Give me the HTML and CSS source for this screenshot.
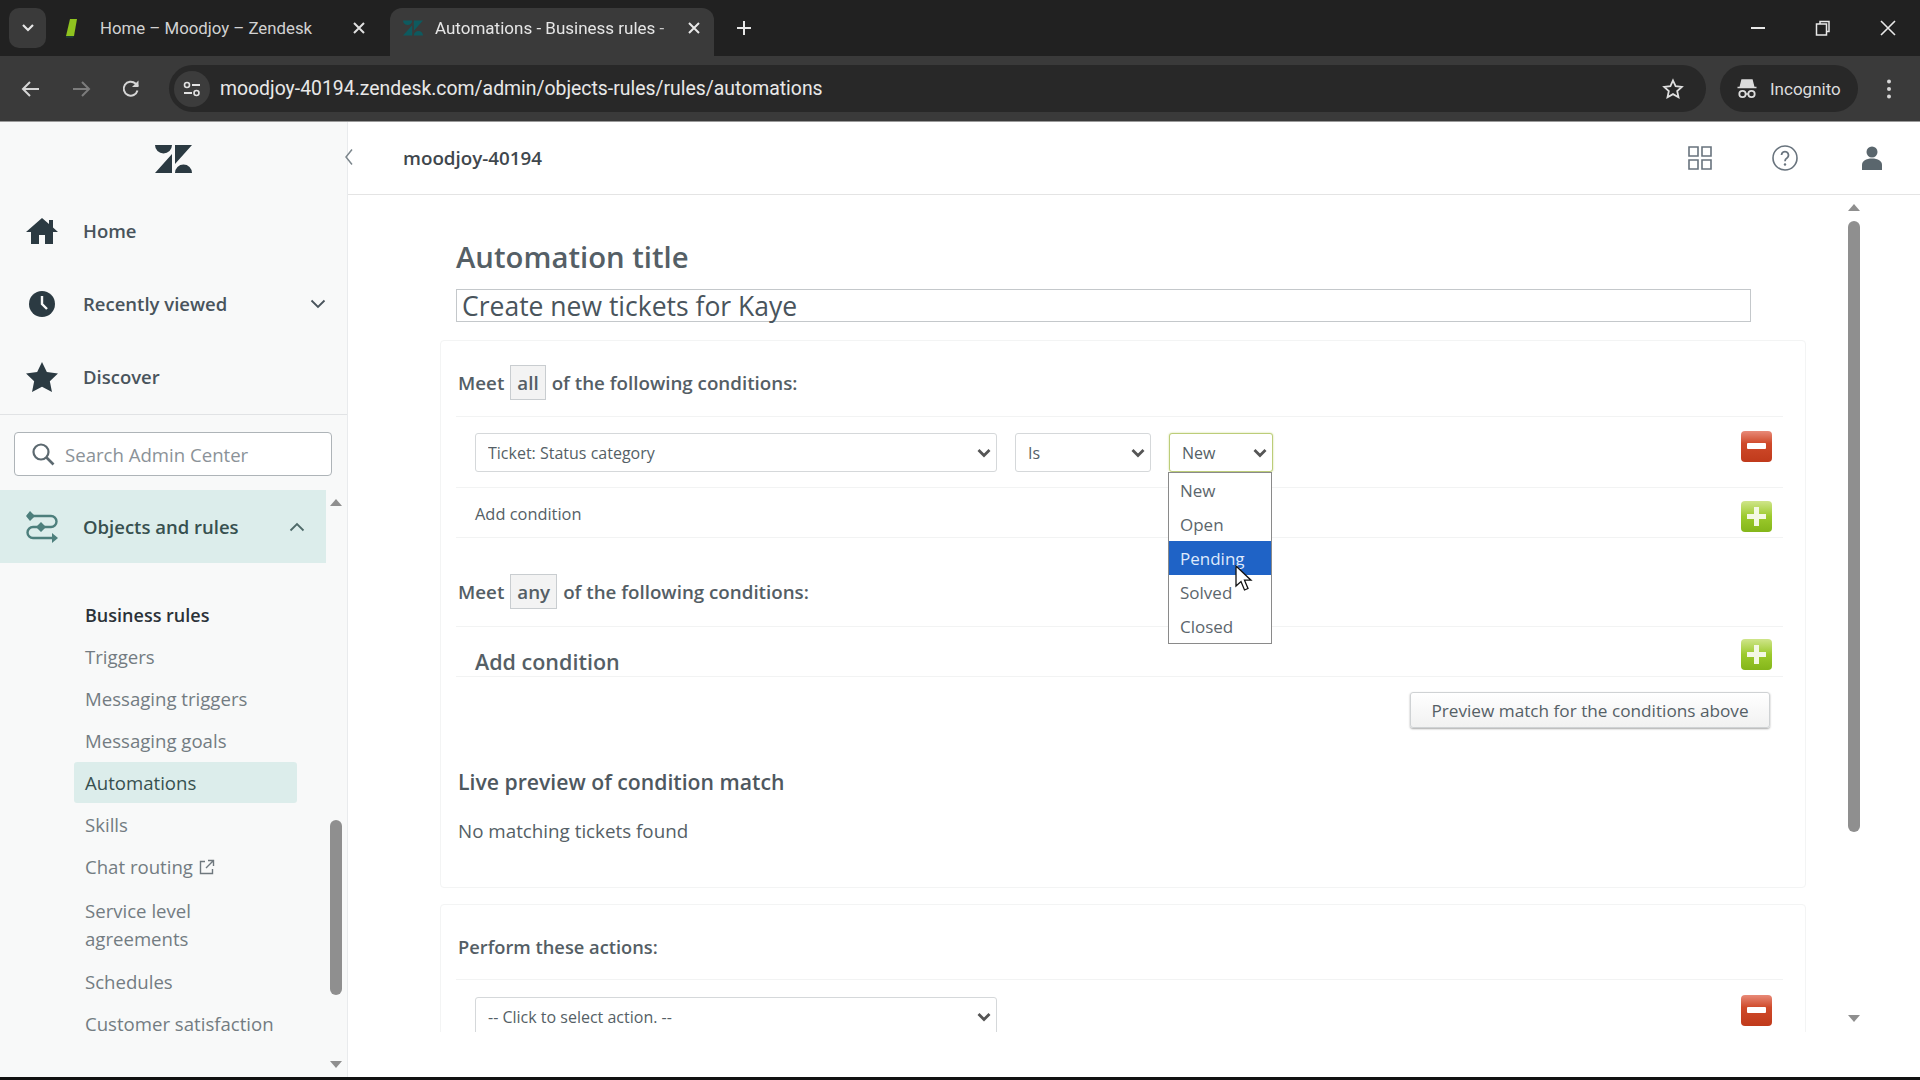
FILE: index.html
```html
<!DOCTYPE html>
<html lang="en">
<head>
<meta charset="utf-8">
<title>Automations - Business rules - Zendesk</title>
<link rel="stylesheet" href="styles.css">
</head>
<body>
<div class="chrome-tabs">
  <button class="tab-search"><svg width="14" height="10" viewBox="0 0 14 10"><path d="M2 2l5 5 5-5" fill="none" stroke="#e6e6e6" stroke-width="2.2"/></svg></button>
  <div class="tab">
    <svg class="favicon" width="18" height="20" viewBox="0 0 18 20"><path d="M6 1h7L10 18H2z" fill="#8fc31f"/><path d="M2 18h8l-1 2H2z" fill="#1d3a2f"/></svg>
    <span class="tab-title">Home – Moodjoy – Zendesk</span>
    <svg class="tab-x" width="14" height="14" viewBox="0 0 14 14"><path d="M2 2l10 10M12 2L2 12" stroke="#e0e0e0" stroke-width="2"/></svg>
  </div>
  <div class="tab tab-active">
    <svg class="favicon" width="20" height="18" viewBox="0 0 37 28"><path d="M0 0H17A8.500 8.500 0 0 1 0 0ZM17 9V28H0ZM20 0V19L37 0ZM20 28A8.500 8.500 0 0 1 37 28Z" fill="#0e5a5f"/></svg>
    <span class="tab-title tab-fade">Automations - Business rules -</span>
    <svg class="tab-x" width="14" height="14" viewBox="0 0 14 14"><path d="M2 2l10 10M12 2L2 12" stroke="#e8e8e8" stroke-width="2"/></svg>
  </div>
  <svg class="new-tab" width="16" height="16" viewBox="0 0 16 16"><path d="M8 1v14M1 8h14" stroke="#e6e6e6" stroke-width="2"/></svg>
  <div class="win-controls">
    <svg width="16" height="16" viewBox="0 0 16 16"><path d="M1 8h14" stroke="#e8e8e8" stroke-width="2"/></svg>
    <svg width="16" height="16" viewBox="0 0 16 16"><path d="M5 3.500V1.500h9v10h-2.500M1.500 4h10v11h-10z" fill="none" stroke="#e8e8e8" stroke-width="1.500"/></svg>
    <svg width="16" height="16" viewBox="0 0 16 16"><path d="M1 1l14 14M15 1L1 15" stroke="#e8e8e8" stroke-width="1.600"/></svg>
  </div>
</div>

<div class="chrome-toolbar">
  <div class="nav-buttons">
    <svg width="20" height="20" viewBox="0 0 20 20"><path d="M18 10H3M9 3l-7 7 7 7" fill="none" stroke="#d6d6d6" stroke-width="2"/></svg>
    <svg width="20" height="20" viewBox="0 0 20 20"><path d="M2 10h15M11 3l7 7-7 7" fill="none" stroke="#7c7c7c" stroke-width="2"/></svg>
    <svg width="20" height="20" viewBox="0 0 20 20"><path d="M16.500 11.500A7 7 0 1 1 14.500 4.500L17 7" fill="none" stroke="#d6d6d6" stroke-width="2"/><path d="M17.500 1.500v6.500h-6.500z" fill="#d6d6d6"/></svg>
  </div>
  <div class="address">
    <span class="site-icon"><svg width="20" height="20" viewBox="0 0 20 20"><circle cx="5" cy="6" r="2.500" fill="none" stroke="#e2e2e2" stroke-width="1.600"/><path d="M10 6h8M2 14h8" stroke="#e2e2e2" stroke-width="1.800"/><circle cx="14.500" cy="14" r="2.500" fill="none" stroke="#e2e2e2" stroke-width="1.600"/></svg></span>
    <span class="url">moodjoy-40194.zendesk.com/admin/objects-rules/rules/automations</span>
    <svg class="bookmark" width="22" height="22" viewBox="0 0 22 22"><path d="M11 2.500l2.600 5.700 6.200.7-4.600 4.200 1.300 6.100L11 16.100l-5.500 3.100 1.300-6.100-4.600-4.200 6.200-.7z" fill="none" stroke="#e0e0e0" stroke-width="1.800"/></svg>
  </div>
  <div class="incognito">
    <svg width="22" height="22" viewBox="0 0 22 22"><path d="M6 2h10l1.500 6h-13zM1.500 9.500h19" fill="#dcdcdc" stroke="#dcdcdc" stroke-width="1.500"/><circle cx="6.500" cy="16" r="3.200" fill="none" stroke="#dcdcdc" stroke-width="1.800"/><circle cx="15.500" cy="16" r="3.200" fill="none" stroke="#dcdcdc" stroke-width="1.800"/><path d="M9.700 16h2.600" stroke="#dcdcdc" stroke-width="1.500"/></svg>
    <span>Incognito</span>
  </div>
  <svg class="kebab" width="6" height="22" viewBox="0 0 6 22"><circle cx="3" cy="3.500" r="2" fill="#d6d6d6"/><circle cx="3" cy="11" r="2" fill="#d6d6d6"/><circle cx="3" cy="18.500" r="2" fill="#d6d6d6"/></svg>
</div>

<div class="app">
  <aside class="sidebar">
    <div class="brand">
      <svg width="37" height="28" viewBox="0 0 37 28"><path d="M0 0H17A8.500 8.500 0 0 1 0 0ZM17 9V28H0ZM20 0V19L37 0ZM20 28A8.500 8.500 0 0 1 37 28Z" fill="#2b3a42"/></svg>
    </div>
    <nav class="primary-nav">
      <a class="nav-row">
        <svg class="nav-icon" width="34" height="28" viewBox="0 0 34 28"><path d="M17 1L1 15h5v12h8v-9h6v9h8V15h5l-5-4.400V3h-4v4.100z" fill="#2b3a42"/></svg>
        <span>Home</span>
      </a>
      <a class="nav-row">
        <svg class="nav-icon" width="34" height="28" viewBox="0 0 34 28"><circle cx="17" cy="14" r="13" fill="#2b3a42"/><path d="M17 6v8l5 5" fill="none" stroke="#f8f9f9" stroke-width="2.400"/></svg>
        <span>Recently viewed</span>
        <svg class="nav-chev" width="16" height="10" viewBox="0 0 16 10"><path d="M1.500 1.500L8 8l6.500-6.500" fill="none" stroke="#49545c" stroke-width="1.800"/></svg>
      </a>
      <a class="nav-row">
        <svg class="nav-icon" width="34" height="30" viewBox="0 0 34 31"><path d="M17 0l5 10.400 11.500 1.500-8.400 7.900 2.200 11.200L17 25.500 6.700 31l2.200-11.200L.5 11.900 12 10.400z" fill="#2b3a42"/></svg>
        <span>Discover</span>
      </a>
    </nav>
    <div class="search">
      <svg width="24" height="24" viewBox="0 0 24 24"><circle cx="10" cy="10" r="7.500" fill="none" stroke="#5c6970" stroke-width="2.200"/><path d="M15.500 15.500l7 7" stroke="#5c6970" stroke-width="2.600"/></svg>
      <span>Search Admin Center</span>
    </div>
    <a class="section-row">
      <svg class="nav-icon" width="34" height="34" viewBox="0 0 34 34"><path d="M2 6h24a5 5 0 0 1 0 11H8a5.500 5.500 0 0 0 0 11h22" fill="none" stroke="#4d7f7c" stroke-width="2.400"/><path d="M5 1l5 5-5 5-4-5zM16 12l5 5-5 5-5-5z" fill="#4d7f7c"/><path d="M27 23l6 5-6 5z" fill="#4d7f7c"/></svg>
      <span>Objects and rules</span>
      <svg class="nav-chev" width="16" height="10" viewBox="0 0 16 10"><path d="M1.500 8.500L8 2l6.500 6.500" fill="none" stroke="#4f6a69" stroke-width="1.800"/></svg>
    </a>
    <ul class="subnav">
      <li class="sub-heading">Business rules</li>
      <li>Triggers</li>
      <li>Messaging triggers</li>
      <li>Messaging goals</li>
      <li class="sub-active"><span>Automations</span></li>
      <li>Skills</li>
      <li>Chat routing <svg class="ext" width="16" height="16" viewBox="0 0 16 16"><path d="M6 2.500H1.500v12h12V10M9 1.500h5.500V7M14.500 1.500L7 9" fill="none" stroke="#6f787e" stroke-width="1.400"/></svg></li>
      <li class="sub-two">Service level<br>agreements</li>
      <li>Schedules</li>
      <li>Customer satisfaction</li>
    </ul>
    <div class="side-scroll">
      <i class="arrow-up"></i>
      <i class="side-thumb"></i>
      <i class="arrow-down"></i>
    </div>
  </aside>

  <main class="content">
    <svg class="collapse" width="10" height="18" viewBox="0 0 10 18"><path d="M8 1.500L2 9l6 7.500" fill="none" stroke="#7c868c" stroke-width="1.500"/></svg>
    <header class="topbar">
      <span class="account">moodjoy-40194</span>
      <div class="top-icons">
        <svg width="24" height="24" viewBox="0 0 24 24"><path d="M1 1h9v9H1zM14 1h9v9h-9zM1 14h9v9H1zM14 14h9v9h-9z" fill="none" stroke="#68737d" stroke-width="1.600"/></svg>
        <svg width="26" height="26" viewBox="0 0 26 26"><circle cx="13" cy="13" r="12" fill="none" stroke="#68737d" stroke-width="1.600"/><path d="M9.500 10a3.500 3.500 0 1 1 5.500 3c-1.400.9-2 1.500-2 3.200" fill="none" stroke="#68737d" stroke-width="1.800"/><circle cx="13" cy="19.500" r="1.200" fill="#68737d"/></svg>
        <svg class="person" width="20" height="24" viewBox="0 0 20 24"><circle cx="10" cy="6" r="5.500" fill="#5a666d"/><path d="M0 24v-5c0-4 4-6.500 10-6.500s10 2.500 10 6.500v5z" fill="#5a666d"/></svg>
      </div>
    </header>
    <div class="scroller">
      <div class="form-head">
        <h1>Automation title</h1>
        <div class="title-input">Create new tickets for Kaye</div>
      </div>

      <section class="card card-main">
        <div class="meet-row meet-first">Meet <b class="pill">all</b> of the following conditions:</div>
        <div class="cond-row">
          <select class="sel sel-field"><option>Ticket: Status category</option></select>
          <select class="sel sel-op"><option>Is</option></select>
          <select class="sel sel-val"><option>New</option></select>
          <span class="btn-icon btn-minus"><i></i></span>
        </div>
        <div class="add-row add-row-small">
          <span class="add-small">Add condition</span>
          <span class="btn-icon btn-plus"><i></i><i></i></span>
        </div>
        <div class="meet-row meet-second">Meet <b class="pill">any</b> of the following conditions:</div>
        <div class="add-row add-row-big">
          <span class="add-big">Add condition</span>
          <span class="btn-icon btn-plus"><i></i><i></i></span>
        </div>
        <div class="preview-action"><button class="preview-btn">Preview match for the conditions above</button></div>
        <h2>Live preview of condition match</h2>
        <p class="no-match">No matching tickets found</p>
      </section>

      <section class="card card-actions">
        <div class="actions-title">Perform these actions:</div>
        <div class="action-row">
          <select class="sel sel-field"><option>-- Click to select action. --</option></select>
          <span class="btn-icon btn-minus"><i></i></span>
        </div>
      </section>

      <ul class="dropdown">
        <li>New</li>
        <li>Open</li>
        <li class="dd-active">Pending</li>
        <li>Solved</li>
        <li>Closed</li>
      </ul>
      <svg class="cursor" width="18" height="27" viewBox="0 0 18 27"><path d="M1 1v20l5-4.500 3.500 8.500 3.500-1.500-3.500-8.300H16z" fill="#fff" stroke="#111" stroke-width="1.300"/></svg>
    </div>
    <div class="main-scroll">
      <i class="arrow-up"></i>
      <i class="main-thumb"></i>
      <i class="arrow-down"></i>
    </div>
  </main>
</div>
<div class="bottom-edge"></div>
</body>
</html>
```

FILE: styles.css
```css
* { box-sizing: border-box; }
html, body { margin: 0; height: 1080px; overflow: hidden; }
body { width: 1920px; font-family: "Open Sans", "Noto Sans", sans-serif; color: #49545c; background: #fff; display: flex; flex-direction: column; }

/* browser chrome */
.chrome-tabs { height: 56px; flex: none; background: #212121; display: flex; align-items: flex-end; position: relative; font-family: Roboto, "Liberation Sans", sans-serif; }
.tab-search { width: 37px; height: 40px; margin: 0 0 8px 9px; border: 0; border-radius: 10px; background: #3a3a3a; display: flex; align-items: center; justify-content: center; padding: 0; }
.tab { width: 340px; height: 48px; display: flex; align-items: center; padding: 0 30px 8px 8px; color: #d2d2d2; font-size: 16.8px; margin-left: 10px; }
.tab .favicon { flex: none; margin-right: 18px; }
.tab-title { flex: 1; white-space: nowrap; }
.tab-x { flex: none; margin-left: 8px; }
.tab-active { width: 324px; margin-left: -6px; padding: 0 13px 8px 13px; background: #3a3a3a; border-radius: 12px 12px 0 0; color: #e6e6e6; font-size: 17px; }
.tab-active .favicon { margin-right: 12px; }
.tab-fade { -webkit-mask-image: linear-gradient(90deg, #000 90%, #0006 100%); mask-image: linear-gradient(90deg, #000 90%, #0006 100%); }
.new-tab { margin: 0 0 20px 22px; }
.win-controls { margin-left: auto; display: flex; gap: 49px; padding: 0 24px 20px 0; }

.chrome-toolbar { height: 66px; flex: none; background: #3a3a3a; display: flex; align-items: center; font-family: Roboto, "Liberation Sans", sans-serif; border-bottom: 1px solid #9a9a9a; }
.nav-buttons { width: 169px; flex: none; display: flex; gap: 30px; padding-left: 21px; }
.address { width: 1537px; height: 47px; flex: none; background: #282828; border-radius: 24px; display: flex; align-items: center; position: relative; }
.site-icon { width: 36px; height: 36px; margin-left: 5px; border-radius: 50%; background: #3c3c3c; display: flex; align-items: center; justify-content: center; flex: none; }
.url { margin-left: 10px; font-size: 19.4px; color: #e8e8e8; white-space: nowrap; }
.bookmark { margin-left: auto; margin-right: 22px; }
.incognito { width: 138px; height: 47px; flex: none; margin-left: 14px; background: #282828; border-radius: 24px; display: flex; align-items: center; gap: 12px; padding-left: 16px; font-size: 17px; color: #dcdcdc; }
.kebab { margin-left: 28px; flex: none; }

/* app layout */
.app { flex: 1; min-height: 0; display: flex; }
.bottom-edge { height: 3px; flex: none; background: #111; }

.sidebar { width: 348px; flex: none; background: #f8f9f9; border-right: 1px solid #e9ebed; position: relative; overflow: hidden; }
.brand { height: 72px; display: flex; align-items: center; justify-content: center; padding-top: 2px; }
.primary-nav { height: 221px; border-bottom: 1px solid #e1e3e5; }
.nav-row { height: 73px; display: flex; align-items: center; padding-left: 25px; font-size: 18.5px; font-weight: 600; color: #49545c; position: relative; }
.nav-icon { flex: none; margin-right: 24px; }
.nav-chev { position: absolute; right: 21px; }
.search { height: 44px; margin: 17px 15px 14px 14px; border: 1px solid #aeb4b8; border-radius: 4px; background: #fff; display: flex; align-items: center; gap: 10px; padding-left: 16px; font-size: 18.6px; color: #8b9298; }
.section-row { height: 73px; width: 326px; display: flex; align-items: center; padding-left: 25px; background: #dcedeb; font-size: 18.5px; font-weight: 600; color: #37504f; position: relative; }
.section-row .nav-chev { right: 21px; }
.subnav { list-style: none; margin: 32px 0 0; padding: 0 0 0 85px; font-size: 18.6px; color: #737c82; }
.subnav li { height: 42px; display: flex; align-items: center; gap: 6px; white-space: nowrap; }
.subnav .sub-heading { height: 40px; font-size: 18px; font-weight: 600; color: #2b3238; }
.subnav .sub-active { color: #37504f; margin-left: -11px; width: 223px; padding-left: 11px; height: 41px; margin-top: 1px; background: #dcedeb; border-radius: 3px; }
.subnav .sub-two { display: block; height: 73px; padding-top: 10px; line-height: 28px; }
.ext { margin-top: 2px; }
.side-scroll { position: absolute; left: 330px; top: 368px; width: 12px; height: 587px; }
.side-thumb { position: absolute; left: 0; top: 330px; width: 12px; height: 175px; border-radius: 6px; background: #8f8f8f; }
.arrow-up, .arrow-down { position: absolute; left: 0; width: 0; height: 0; border-left: 6px solid transparent; border-right: 6px solid transparent; }
.arrow-up { top: 9px; border-bottom: 7px solid #8f8f8f; }
.arrow-down { bottom: 9px; border-top: 7px solid #8f8f8f; }

.content { flex: 1; min-width: 0; display: flex; flex-direction: column; position: relative; background: #fff; }
.collapse { position: absolute; left: -4px; top: 26px; }
.topbar { height: 73px; flex: none; border-bottom: 1px solid #e4e4e4; display: flex; align-items: center; justify-content: space-between; padding: 0 38px 0 55px; }
.account { font-size: 18.8px; font-weight: 600; color: #3f474d; }
.top-icons { display: flex; align-items: center; gap: 60px; }
.person { margin-left: 4px; }
.scroller { height: 837px; flex: none; overflow: hidden; padding: 0 0 0 92px; position: relative; }
.form-head { padding: 0 0 0 16px; }
h1 { margin: 0; height: 94px; padding-top: 40px; font-size: 29.3px; font-weight: 600; line-height: 44px; color: #555f66; }
.title-input { width: 1295px; height: 33px; border: 1px solid #c4c8cb; font-size: 26.5px; line-height: 33px; padding-left: 5px; color: #49545c; }

.card { width: 1366px; border: 1px solid #f3f4f4; border-radius: 4px; padding: 0 22px 0 15px; background: #fff; }
.card-main { margin-top: 18px; height: 548px; }
.card-actions { margin-top: 16px; height: 200px; }
.meet-row { display: flex; align-items: center; font-size: 18.75px; font-weight: 600; color: #545e65; border-bottom: 1px solid #f2f3f3; padding-left: 2px; }
.meet-first { height: 76px; padding-top: 7px; }
.meet-second { height: 89px; padding-top: 18px; }
.pill { font-weight: 600; height: 35px; padding: 0 6px; margin: 0 6px; border: 1px solid #c9cdd0; background: #f3f3f3; display: inline-flex; align-items: center; }
.cond-row { height: 71px; display: flex; align-items: center; padding: 1px 11px 0 19px; gap: 18px; border-bottom: 1px solid #f2f3f3; position: relative; }
.sel { height: 39px; appearance: none; -webkit-appearance: none; font-family: "Open Sans", "Noto Sans", sans-serif; font-size: 16px; color: #555f66; background: #fff url("data:image/svg+xml,%3Csvg xmlns='http://www.w3.org/2000/svg' width='14' height='10' viewBox='0 0 14 10'%3E%3Cpath d='M1.500 2L7 7.500 12.500 2' fill='none' stroke='%23555' stroke-width='2.800'/%3E%3C/svg%3E") no-repeat right 5px center; border: 1px solid #d5d8da; border-radius: 3px; padding: 0 12px; }
.sel-field { width: 522px; }
.sel-op { width: 136px; }
.sel-val { width: 104px; border: 1px solid #bccd79; box-shadow: 0 0 2px #c9d98a; }
.cond-row .btn-icon { margin-left: auto; margin-bottom: 13px; }
.add-row { height: 50px; display: flex; align-items: center; justify-content: space-between; padding: 0 11px 0 19px; border-bottom: 1px solid #f2f3f3; }
.add-small { font-size: 16.4px; color: #555f66; padding-top: 2px; }
.add-row-small .btn-icon { margin-top: 7px; }
.add-big { font-size: 21.5px; font-weight: 600; color: #555f66; padding-top: 20px; }
.add-row-big { height: 50px; }
.add-row-big .btn-icon { margin-top: 5px; }
.btn-icon { width: 31px; height: 31px; flex: none; border-radius: 4px; position: relative; display: block; }
.btn-minus { background: linear-gradient(#e88a78, #cf4a2a 40%, #c03a1b); }
.btn-plus { background: linear-gradient(#cfe58a, #9cca2c 50%, #84b61a); }
.btn-minus i { position: absolute; left: 6px; top: 12px; width: 19px; height: 6px; background: #fff; border-radius: 1px; }
.btn-plus i:first-child { position: absolute; left: 6px; top: 13px; width: 19px; height: 5px; background: #f4f8e4; }
.btn-plus i:last-child { position: absolute; left: 13px; top: 6px; width: 5px; height: 19px; background: #f4f8e4; }
.preview-action { display: flex; justify-content: flex-end; padding: 15px 13px 0 0; }
.preview-btn { width: 360px; height: 36px; border: 1px solid #cfd2d4; border-radius: 3px; background: linear-gradient(#fff, #f1f1f1); box-shadow: 0 1px 2px #a8a8a8; font-family: "Open Sans", "Noto Sans", sans-serif; font-size: 17.2px; color: #555f66; padding: 0; }
h2 { margin: 39px 0 0 2px; font-size: 21.2px; font-weight: 600; line-height: 30px; color: #4e585f; }
.no-match { margin: 19px 0 0 2px; font-size: 18.8px; line-height: 30px; color: #555f66; }
.actions-title { height: 75px; display: flex; align-items: center; padding: 8px 0 0 2px; font-size: 18.3px; font-weight: 600; color: #545e65; border-bottom: 1px solid #f2f3f3; }
.action-row { display: flex; align-items: flex-start; justify-content: space-between; padding: 17px 11px 0 19px; }
.action-row .btn-icon { margin-top: -2px; }

.dropdown { position: absolute; left: 820px; top: 277px; width: 104px; height: 172px; margin: 0; padding: 0; list-style: none; background: #fff; border: 1px solid #8a8a8a; font-size: 17px; color: #5c666c; }
.dropdown li { height: 34px; padding-left: 11px; display: flex; align-items: center; }
.dropdown .dd-active { background: #1f63c6; color: #dfeafc; }
.cursor { position: absolute; left: 887px; top: 370px; }

.main-scroll { position: absolute; left: 1500px; top: 73px; width: 12px; height: 837px; }
.main-thumb { position: absolute; left: 0; top: 26px; width: 12px; height: 611px; border-radius: 6px; background: #8f8f8f; }
.main-scroll .arrow-up { top: 9px; }
.main-scroll .arrow-down { bottom: 10px; }
```
